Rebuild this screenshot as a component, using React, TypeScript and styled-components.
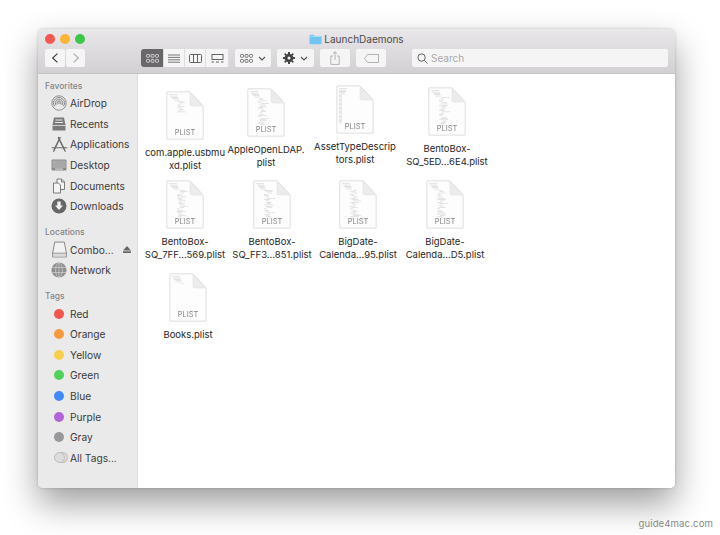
import React from 'react';
import styled, { createGlobalStyle } from 'styled-components';

const GlobalStyle = createGlobalStyle`
  html, body {
    margin: 0;
    padding: 0;
    background: #fff;
    font-family: Inter, "Liberation Sans", sans-serif;
  }
`;

const favorites = [
  { name: 'AirDrop', icon: 'airdrop' },
  { name: 'Recents', icon: 'recents' },
  { name: 'Applications', icon: 'apps' },
  { name: 'Desktop', icon: 'desktop' },
  { name: 'Documents', icon: 'documents' },
  { name: 'Downloads', icon: 'downloads' },
];

const tags = [
  { name: 'Red', color: '#f5544f' },
  { name: 'Orange', color: '#f79a3e' },
  { name: 'Yellow', color: '#f8cf4a' },
  { name: 'Green', color: '#4fd15c' },
  { name: 'Blue', color: '#3f8af7' },
  { name: 'Purple', color: '#b066d8' },
  { name: 'Gray', color: '#98989a' },
];

// Finder icon view: every file sits where the user left it
const files = [
  { label: 'com.apple.usbmu\nxd.plist', x: 185, y: 17, lines: 14, seed: 3, list: false },
  { label: 'AppleOpenLDAP.\nplist', x: 266, y: 14, lines: 26, seed: 7, list: false },
  { label: 'AssetTypeDescrip\ntors.plist', x: 355, y: 11, lines: 27, seed: 11, list: true },
  { label: 'BentoBox-\nSQ_5ED...6E4.plist', x: 447, y: 13, lines: 27, seed: 5, list: false },
  { label: 'BentoBox-\nSQ_7FF...569.plist', x: 185, y: 106, lines: 27, seed: 13, list: false },
  { label: 'BentoBox-\nSQ_FF3...851.plist', x: 272, y: 106, lines: 27, seed: 17, list: false },
  { label: 'BigDate-\nCalenda...95.plist', x: 358, y: 106, lines: 27, seed: 19, list: false },
  { label: 'BigDate-\nCalenda...D5.plist', x: 445, y: 106, lines: 27, seed: 23, list: false },
  { label: 'Books.plist', x: 188, y: 199, lines: 6, seed: 29, list: false },
];

const buildLines = (count: number, seed: number, list: boolean) => {
  const out = [];
  for (let i = 0; i < count; i++) {
    const n = (seed * (i + 3) * 7) % 11;
    const head = i < 5;
    const x = list ? 3 + (n % 3) * 1.2 : head ? 3 + i * 1.1 : 11 + (n % 3) * 1.5;
    const w = head ? 8 - i * 0.6 : 3 + (n % 7);
    out.push({ x, y: 3.5 + i * 1.32, w });
  }
  return out;
};

const PlistIcon = ({ lines, seed, list }: { lines: number; seed: number; list: boolean }) => (
  <PageSvg viewBox="0 0 38 49" width="38" height="49">
    <path d="M1 1H24L37 15V48H1Z" fill="#fdfdfd" stroke="#dcdcdc" strokeWidth="0.6" />
    {buildLines(lines, seed, list).map((l, i) => (
      <rect key={i} x={l.x} y={l.y} width={l.w} height="0.55" fill="#8f8f8f" opacity="0.4" />
    ))}
    <path d="M24 1V13Q24 15 26 15H37Z" fill="#ececec" stroke="#dcdcdc" strokeWidth="0.5" />
    <text x="19" y="43.5" textAnchor="middle" fontSize="7.5" fill="#868686" fontFamily="Inter, sans-serif">
      PLIST
    </text>
  </PageSvg>
);

const SidebarIcon = ({ name }: { name: string }) => {
  switch (name) {
    case 'airdrop':
      return (
        <svg viewBox="0 0 16 16" width="16" height="16" fill="none" stroke="#7a7a7a">
          <circle cx="8" cy="8" r="7.2" strokeWidth="0.8" />
          <path d="M3.6 11.2A5.4 5.4 0 1 1 12.4 11.2" strokeWidth="0.9" />
          <path d="M5 10.2A3.7 3.7 0 1 1 11 10.2" strokeWidth="0.9" />
          <path d="M6.4 9.3A2 2 0 1 1 9.6 9.3" strokeWidth="0.9" />
          <circle cx="8" cy="8" r="0.8" fill="#7a7a7a" stroke="none" />
        </svg>
      );
    case 'recents':
      return (
        <svg viewBox="0 0 16 16" width="16" height="16">
          <path d="M3 1.5H13L14.5 9V14.5H1.5V9Z" fill="#7a7a7a" />
          <rect x="4.5" y="3.5" width="7" height="1" fill="#e6e6e6" />
          <rect x="4" y="6" width="8" height="1" fill="#e6e6e6" />
          <rect x="1.5" y="9" width="13" height="0.8" fill="#e6e6e6" />
        </svg>
      );
    case 'apps':
      return (
        <svg viewBox="0 0 16 16" width="17" height="17" fill="none" stroke="#6c6c6c" strokeLinecap="round">
          <path d="M8.5 1.5L3 13" strokeWidth="1.4" />
          <path d="M7 1.5L12.8 13" strokeWidth="1.4" />
          <path d="M1 11H15" strokeWidth="1" />
          <path d="M2.4 14.5L3.4 13M13.5 14.5L12.6 13" strokeWidth="1" />
        </svg>
      );
    case 'desktop':
      return (
        <svg viewBox="0 0 16 16" width="16" height="16">
          <rect x="0.5" y="2.5" width="15" height="11" rx="1" fill="#8a8a8a" />
          <rect x="1.3" y="3.4" width="13.4" height="7.6" fill="#a9a9a9" />
          <rect x="4" y="11.6" width="8" height="1" fill="#e0e0e0" />
        </svg>
      );
    case 'documents':
      return (
        <svg viewBox="0 0 16 16" width="16" height="16" fill="#f4f4f4" stroke="#6e6e6e" strokeWidth="0.9">
          <path d="M6 1H10.5L13.5 4V11.5H6Z" />
          <path d="M2.5 5H7.5L9.5 7V15H2.5Z" />
          <path d="M10.5 1V4H13.5" fill="none" />
        </svg>
      );
    case 'downloads':
      return (
        <svg viewBox="0 0 16 16" width="16" height="16">
          <circle cx="8" cy="8" r="7.5" fill="#666" />
          <path d="M6.3 3.5H9.7V7.5H12L8 12L4 7.5H6.3Z" fill="#f0f0f0" />
        </svg>
      );
    case 'disk':
      return (
        <svg viewBox="0 0 16 16" width="17" height="17" fill="none" stroke="#777" strokeWidth="0.8">
          <path d="M3.5 1H12.5L14.5 11.5V15H1.5V11.5Z" fill="#f2f2f2" />
          <path d="M1.5 11.5H14.5" />
          <rect x="1.8" y="12" width="12.4" height="2.6" fill="#d9d9d9" stroke="none" />
        </svg>
      );
    default:
      return (
        <svg viewBox="0 0 16 16" width="16" height="16" fill="none" stroke="#dadada" strokeWidth="0.6">
          <circle cx="8" cy="8" r="7.6" fill="#8f8f8f" stroke="none" />
          <ellipse cx="8" cy="8" rx="3.4" ry="7.4" />
          <path d="M1 5.5H15M1 10.5H15M8 0.5V15.5" />
        </svg>
      );
  }
};

export default function App() {
  return (
    <Page>
      <GlobalStyle />
      <Window>
        <Header>
          <TitleRow>
            <Lights>
              <Light $color="#f4574f" />
              <Light $color="#fbb434" />
              <Light $color="#3bc748" />
            </Lights>
            <Title>
              <svg viewBox="0 0 14 11" width="13" height="11">
                <path d="M0.5 1.5Q0.5 0.5 1.5 0.5H5L6.2 1.8H12.5Q13.5 1.8 13.5 2.8V9.5Q13.5 10.5 12.5 10.5H1.5Q0.5 10.5 0.5 9.5Z" fill="#72c4f2" />
                <rect x="0.5" y="1.8" width="13" height="1" fill="#a5dcf8" />
              </svg>
              LaunchDaemons
            </Title>
          </TitleRow>
          <Toolbar>
            <ButtonGroup>
              <ToolButton $width={20}>
                <svg viewBox="0 0 10 14" width="8" height="12" fill="none" stroke="#333" strokeWidth="1.3">
                  <path d="M8 1.5L2 7L8 12.5" />
                </svg>
              </ToolButton>
              <ToolButton $width={19}>
                <svg viewBox="0 0 10 14" width="8" height="12" fill="none" stroke="#a8a8a8" strokeWidth="1.3">
                  <path d="M2 1.5L8 7L2 12.5" />
                </svg>
              </ToolButton>
            </ButtonGroup>
            <ViewSwitch>
              <ToolButton $width={23} $active>
                <svg viewBox="0 0 13 9" width="13" height="9" fill="none" stroke="#f0f0f0" strokeWidth="0.8">
                  <rect x="0.5" y="0.5" width="3" height="2.8" rx="0.8" />
                  <rect x="5" y="0.5" width="3" height="2.8" rx="0.8" />
                  <rect x="9.5" y="0.5" width="3" height="2.8" rx="0.8" />
                  <rect x="0.5" y="5.5" width="3" height="2.8" rx="0.8" />
                  <rect x="5" y="5.5" width="3" height="2.8" rx="0.8" />
                  <rect x="9.5" y="5.5" width="3" height="2.8" rx="0.8" />
                </svg>
              </ToolButton>
              <ToolButton $width={21}>
                <svg viewBox="0 0 12 9" width="12" height="9" stroke="#555" strokeWidth="0.8">
                  <path d="M0 1H12M0 3.4H12M0 5.8H12M0 8.2H12" />
                </svg>
              </ToolButton>
              <ToolButton $width={21}>
                <svg viewBox="0 0 13 9" width="13" height="9" fill="none" stroke="#555" strokeWidth="0.9">
                  <rect x="0.5" y="0.5" width="12" height="8" rx="1" />
                  <path d="M4.5 0.5V8.5M8.5 0.5V8.5" />
                </svg>
              </ToolButton>
              <ToolButton $width={23}>
                <svg viewBox="0 0 13 9" width="13" height="9" fill="none" stroke="#555" strokeWidth="0.9">
                  <rect x="1" y="0.5" width="11" height="5" />
                  <path d="M0.5 8H3M5 8H8M10 8H12.5" />
                </svg>
              </ToolButton>
            </ViewSwitch>
            <ToolButton $width={36} $gap={5}>
              <svg viewBox="0 0 13 9" width="13" height="9" fill="none" stroke="#555" strokeWidth="0.8">
                <rect x="0.5" y="0.5" width="3" height="2.8" rx="0.8" />
                <rect x="5" y="0.5" width="3" height="2.8" rx="0.8" />
                <rect x="9.5" y="0.5" width="3" height="2.8" rx="0.8" />
                <rect x="0.5" y="5.5" width="3" height="2.8" rx="0.8" />
                <rect x="5" y="5.5" width="3" height="2.8" rx="0.8" />
                <rect x="9.5" y="5.5" width="3" height="2.8" rx="0.8" />
              </svg>
              <Chevron />
            </ToolButton>
            <ToolButton $width={37} $gap={5}>
              <svg viewBox="0 0 12 12" width="12" height="12" fill="#444">
                <path d="M5 0H7V1.8L8.4 2.4L9.7 1.1L10.9 2.3L9.6 3.6L10.2 5H12V7H10.2L9.6 8.4L10.9 9.7L9.7 10.9L8.4 9.6L7 10.2V12H5V10.2L3.6 9.6L2.3 10.9L1.1 9.7L2.4 8.4L1.8 7H0V5H1.8L2.4 3.6L1.1 2.3L2.3 1.1L3.6 2.4L5 1.8ZM6 4.5A1.5 1.5 0 1 0 6 7.5A1.5 1.5 0 1 0 6 4.5Z" fillRule="evenodd" />
              </svg>
              <Chevron />
            </ToolButton>
            <ToolButton $width={30}>
              <svg viewBox="0 0 10 14" width="10" height="14" fill="none" stroke="#a2a2a2" strokeWidth="0.8">
                <path d="M3 5H0.8V13.4H9.2V5H7" />
                <path d="M5 9V0.8M3 2.6L5 0.8L7 2.6" />
              </svg>
            </ToolButton>
            <ToolButton $width={30}>
              <svg viewBox="0 0 15 9" width="15" height="9" fill="none" stroke="#a2a2a2" strokeWidth="0.8">
                <path d="M3.5 0.5H14.5V8.5H3.5L0.5 4.5Z" />
              </svg>
            </ToolButton>
            <SearchField>
              <svg viewBox="0 0 12 12" width="11" height="11" fill="none" stroke="#555" strokeWidth="1">
                <circle cx="5" cy="5" r="4" />
                <path d="M8 8L11.5 11.5" />
              </svg>
              Search
            </SearchField>
          </Toolbar>
        </Header>
        <Body>
          <Sidebar>
            <SectionLabel>Favorites</SectionLabel>
            {favorites.map((item) => (
              <SideRow key={item.name}>
                <IconSlot>
                  <SidebarIcon name={item.icon} />
                </IconSlot>
                {item.name}
              </SideRow>
            ))}
            <SectionLabel $spaced>Locations</SectionLabel>
            <SideRow>
              <IconSlot>
                <SidebarIcon name="disk" />
              </IconSlot>
              Combo...
              <Eject>
                <svg viewBox="0 0 9 8" width="8" height="7" fill="#666">
                  <path d="M4.5 0L9 5H0Z" />
                  <rect y="6" width="9" height="2" />
                </svg>
              </Eject>
            </SideRow>
            <SideRow>
              <IconSlot>
                <SidebarIcon name="network" />
              </IconSlot>
              Network
            </SideRow>
            <SectionLabel $spaced>Tags</SectionLabel>
            {tags.map((tag) => (
              <SideRow key={tag.name}>
                <IconSlot>
                  <TagDot $color={tag.color} />
                </IconSlot>
                {tag.name}
              </SideRow>
            ))}
            <SideRow>
              <IconSlot>
                <AllTagsDots />
              </IconSlot>
              All Tags...
            </SideRow>
          </Sidebar>
          <Canvas>
            {files.map((file) => (
              <FileItem key={file.label} $x={file.x} $y={file.y}>
                <PlistIcon lines={file.lines} seed={file.seed} list={file.list} />
                <FileLabel>{file.label}</FileLabel>
              </FileItem>
            ))}
          </Canvas>
        </Body>
      </Window>
      <Watermark>guide4mac.com</Watermark>
    </Page>
  );
}

const Chevron = () => (
  <svg viewBox="0 0 8 5" width="8" height="5" fill="none" stroke="#555" strokeWidth="1.1">
    <path d="M1 1L4 4L7 1" />
  </svg>
);

const Page = styled.div`
  position: relative;
  width: 720px;
  height: 535px;
  padding: 29px 45px 0 38px;
  box-sizing: border-box;
  overflow: hidden;
`;

const Window = styled.div`
  width: 637px;
  height: 459px;
  display: flex;
  flex-direction: column;
  border-radius: 5px;
  overflow: hidden;
  box-shadow: 0 16px 34px rgba(0, 0, 0, 0.38), 0 0 3px rgba(0, 0, 0, 0.2);
`;

const Header = styled.div`
  height: 45px;
  flex-shrink: 0;
  box-sizing: border-box;
  background: linear-gradient(#e9e7e9, #d2d0d2);
  border-bottom: 1px solid #c4c2c4;
`;

const TitleRow = styled.div`
  position: relative;
  height: 20px;
  display: flex;
  align-items: center;
  justify-content: center;
`;

const Lights = styled.div`
  position: absolute;
  left: 7px;
  top: 5px;
  display: flex;
  gap: 5px;
`;

const Light = styled.span<{ $color: string }>`
  width: 10px;
  height: 10px;
  border-radius: 50%;
  background: ${(p) => p.$color};
`;

const Title = styled.div`
  display: flex;
  align-items: center;
  gap: 2px;
  font-size: 10px;
  color: #4a4a4a;
`;

const Toolbar = styled.div`
  display: flex;
  align-items: center;
  height: 18px;
  padding-left: 7px;
  gap: 6px;
`;

const ButtonGroup = styled.div`
  display: flex;
  gap: 1px;
  margin-right: 50px;
`;

const ViewSwitch = styled.div`
  display: flex;
  gap: 0;
  border-radius: 3px;
  overflow: hidden;
`;

const ToolButton = styled.div<{ $width: number; $active?: boolean; $gap?: number }>`
  width: ${(p) => p.$width}px;
  height: 18px;
  display: flex;
  align-items: center;
  justify-content: center;
  gap: ${(p) => p.$gap ?? 0}px;
  border-radius: 2px;
  background: ${(p) => (p.$active ? '#696769' : '#f6f5f6')};
  ${ViewSwitch} & {
    border-radius: 0;
    border-right: 1px solid #dedcde;
    box-sizing: border-box;
  }
`;

const SearchField = styled.div`
  width: 256px;
  height: 18px;
  margin-left: 20px;
  padding-left: 5px;
  box-sizing: border-box;
  display: flex;
  align-items: center;
  gap: 3px;
  font-size: 10px;
  color: #a9a9a9;
  background: #f6f5f6;
  border-radius: 2px;
`;

const Body = styled.div`
  flex: 1;
  display: flex;
  min-height: 0;
`;

const Sidebar = styled.div`
  width: 100px;
  flex-shrink: 0;
  box-sizing: border-box;
  padding-top: 5px;
  background: #ebeaeb;
  border-right: 1px solid #dcdbdc;
`;

const SectionLabel = styled.div<{ $spaced?: boolean }>`
  height: 14px;
  line-height: 14px;
  margin-top: ${(p) => (p.$spaced ? 8.8 : 0)}px;
  padding-left: 7px;
  font-size: 8.5px;
  font-weight: 500;
  color: #858585;
`;

const SideRow = styled.div`
  height: 20.6px;
  display: flex;
  align-items: center;
  gap: 2px;
  padding-left: 12px;
  font-size: 10.2px;
  color: #3a3a3a;
`;

const IconSlot = styled.span`
  width: 18px;
  display: flex;
  align-items: center;
  justify-content: center;
`;

const Eject = styled.span`
  display: flex;
  margin-left: 7px;
`;

const TagDot = styled.span<{ $color: string }>`
  width: 10px;
  height: 10px;
  border-radius: 50%;
  background: ${(p) => p.$color};
`;

const AllTagsDots = styled.span`
  width: 9px;
  height: 9px;
  border-radius: 50%;
  border: 1px solid #bdbdbd;
  background: #dcdcdc;
  box-shadow: 3px 0 0 -1px #dcdcdc, 3px 0 0 0 #bdbdbd;
`;

const Canvas = styled.div`
  position: relative;
  flex: 1;
  background: #fff;
`;

const PageSvg = styled.svg`
  display: block;
  filter: drop-shadow(0 0.5px 0.7px rgba(0, 0, 0, 0.22));
`;

const FileItem = styled.div<{ $x: number; $y: number }>`
  position: absolute;
  left: ${(p) => p.$x - 138 - 50}px;
  top: ${(p) => p.$y}px;
  width: 100px;
  display: flex;
  flex-direction: column;
  align-items: center;
`;

const FileLabel = styled.div`
  margin-top: 6px;
  width: 100px;
  text-align: center;
  white-space: pre-line;
  font-size: 9.5px;
  line-height: 13px;
  color: #262626;
`;

const Watermark = styled.div`
  position: absolute;
  right: 7px;
  top: 518px;
  font-size: 9.6px;
  letter-spacing: 0.1px;
  color: #8a8a8a;
`;
